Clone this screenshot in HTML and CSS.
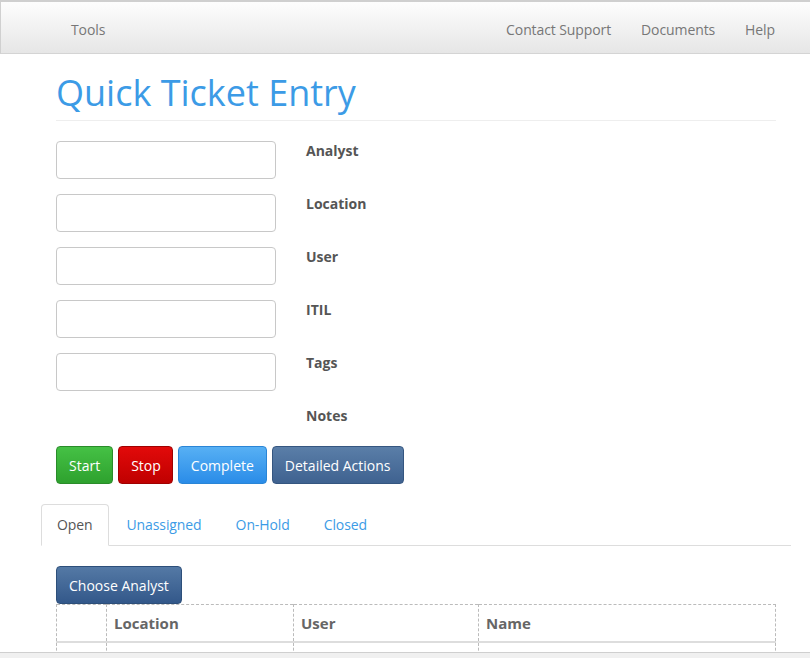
FILE: index.html
```html
<!DOCTYPE html>
<html>
<head>
<meta charset="utf-8">
<title>Quick Ticket Entry</title>
<link rel="stylesheet" href="styles.css">
</head>
<body>
<div class="navbar">
  <ul class="nav nav-left"><li><a href="#">Tools</a></li></ul>
  <ul class="nav nav-right">
    <li><a href="#">Contact Support</a></li>
    <li><a href="#">Documents</a></li>
    <li><a href="#">Help</a></li>
  </ul>
</div>
<div class="container">
  <h1 class="page-title">Quick Ticket Entry</h1>
  <div class="form">
    <div class="form-row"><input class="field" type="text"><label class="label">Analyst</label></div>
    <div class="form-row"><input class="field" type="text"><label class="label">Location</label></div>
    <div class="form-row"><input class="field" type="text"><label class="label">User</label></div>
    <div class="form-row"><input class="field" type="text"><label class="label">ITIL</label></div>
    <div class="form-row"><input class="field" type="text"><label class="label">Tags</label></div>
    <div class="form-row"><span class="field-spacer"></span><label class="label">Notes</label></div>
  </div>
  <div class="actions">
    <button class="btn btn-start">Start</button>
    <button class="btn btn-stop">Stop</button>
    <button class="btn btn-complete">Complete</button>
    <button class="btn btn-detail">Detailed Actions</button>
  </div>
</div>
<div class="tabs-wrap">
  <ul class="tabs">
    <li class="tab active"><a href="#">Open</a></li>
    <li class="tab"><a href="#">Unassigned</a></li>
    <li class="tab"><a href="#">On-Hold</a></li>
    <li class="tab"><a href="#">Closed</a></li>
  </ul>
</div>
<div class="container">
  <div class="tab-pane">
    <button class="btn btn-choose">Choose Analyst</button>
    <table class="grid">
      <thead>
        <tr><th class="col-sel"></th><th class="col-loc">Location</th><th class="col-user">User</th><th class="col-name">Name</th></tr>
      </thead>
      <tbody>
        <tr><td></td><td></td><td></td><td></td></tr>
      </tbody>
    </table>
  </div>
</div>
<div class="hscroll"></div>
</body>
</html>
```
FILE: styles.css
```css
html, body {
  margin: 0;
  padding: 0;
  height: 658px;
  overflow: hidden;
  background: #fff;
  font-family: "Open Sans", "Liberation Sans", sans-serif;
  color: #555;
}

.navbar {
  display: flex;
  justify-content: space-between;
  align-items: center;
  box-sizing: border-box;
  height: 54px;
  padding: 4px 20px 0 55px;
  border-top: 2px solid #cfcfcf;
  border-left: 1px solid #d0d0d0;
  border-bottom: 1px solid #d4d4d4;
  background: linear-gradient(to bottom, #fdfdfd 0%, #e6e6e6 100%);
}
.nav {
  list-style: none;
  margin: 0;
  padding: 0;
  display: flex;
}
.nav a {
  display: block;
  padding: 0 15px;
  font-size: 14px;
  color: #777;
  text-decoration: none;
  letter-spacing: -0.1px;
}

.container {
  padding: 0 34px 0 56px;
}
.page-title {
  margin: 16px 0 0;
  padding-bottom: 4px;
  border-bottom: 1px solid #eee;
  font-size: 36px;
  font-weight: 400;
  line-height: 46px;
  color: #3c9be6;
}
.form {
  margin-top: 20px;
  display: flex;
  flex-direction: column;
  gap: 15px;
}
.form-row {
  display: flex;
  align-items: flex-start;
  gap: 30px;
  height: 38px;
}
.field {
  box-sizing: border-box;
  width: 220px;
  height: 38px;
  margin: 0;
  border: 1px solid #c8c8c8;
  border-radius: 4px;
  background: #fff;
}
.field-spacer {
  width: 220px;
}
.label {
  font-size: 14px;
  font-weight: 700;
  color: #555;
  line-height: 20px;
}
.actions {
  display: flex;
  gap: 5px;
  margin-top: 2px;
}
.btn {
  box-sizing: border-box;
  height: 38px;
  padding: 0 12px;
  border-radius: 4px;
  font-family: "Open Sans", "Liberation Sans", sans-serif;
  font-size: 14px;
  color: #fff;
  cursor: pointer;
}
.btn-start {
  border: 1px solid #2a8c2a;
  background: linear-gradient(to bottom, #45c145 0%, #2ea12e 100%);
}
.btn-stop {
  border: 1px solid #a00000;
  background: linear-gradient(to bottom, #e20a0a 0%, #bf0000 100%);
  padding: 0 11px 0 12px;
}
.btn-complete {
  border: 1px solid #2a85d6;
  background: linear-gradient(to bottom, #57b0f4 0%, #2a8ce8 100%);
}
.btn-detail {
  border: 1px solid #355680;
  background: linear-gradient(to bottom, #5a7ea8 0%, #3f6290 100%);
}

.tabs-wrap {
  padding: 0 19px 0 41px;
  margin-top: 20px;
}
.tabs {
  list-style: none;
  margin: 0;
  padding: 0;
  display: flex;
  border-bottom: 1px solid #ddd;
}
.tab {
  margin-bottom: -1px;
  margin-right: 2px;
}
.tab a {
  display: block;
  box-sizing: border-box;
  padding: 0 15px;
  height: 42px;
  line-height: 40px;
  font-size: 14px;
  color: #3c9be6;
  text-decoration: none;
  letter-spacing: -0.1px;
  border: 1px solid transparent;
  border-radius: 4px 4px 0 0;
}
.tab.active a {
  color: #555;
  background: #fff;
  border-color: #ddd #ddd #fff;
}

.tab-pane {
  padding-top: 20px;
}
.btn-choose {
  display: block;
  padding: 0 12px;
  border: 1px solid #2d4f7a;
  background: linear-gradient(to bottom, #5479a5 0%, #33588a 100%);
}
.grid {
  width: 720px;
  border-collapse: collapse;
  border: 1px dashed #bbb;
  table-layout: fixed;
}
.grid th, .grid td {
  border-left: 1px dashed #bbb;
  text-align: left;
  padding: 0 7px;
}
.grid th {
  height: 35px;
  padding-bottom: 1px;
  border-bottom: 2px solid #ddd;
  font-size: 15px;
  font-weight: 700;
  color: #666;
}
.grid td {
  height: 30px;
}
.col-sel { width: 35px; }
.col-loc { width: 172px; }
.col-user { width: 170px; }

.hscroll {
  position: fixed;
  left: 0;
  right: 0;
  bottom: 0;
  height: 5px;
  background: #f0f0f0;
  border-top: 1px solid #cfcfcf;
}
```
